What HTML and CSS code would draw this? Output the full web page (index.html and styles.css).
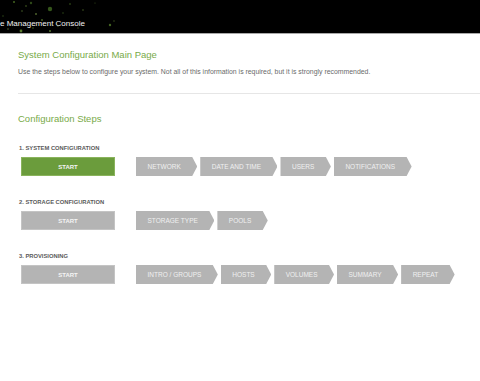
FILE: index.html
```html
<!DOCTYPE html>
<html lang="en">
<head>
    <meta charset="UTF-8">
    <meta name="viewport" content="width=device-width, initial-scale=1.0">
    <title>System Configuration Main Page</title>
    <link rel="stylesheet" href="styles.css">
</head>
<body>
    <div class="header">
        <svg class="sparks" width="140" height="33" viewBox="0 0 140 33">
            <circle cx="14" cy="2" r="1" fill="#5f8f2f" opacity="0.7"/>
            <circle cx="26" cy="6" r="0.8" fill="#7fb040" opacity="0.6"/>
            <circle cx="31" cy="3" r="1.2" fill="#4f7a28" opacity="0.6"/>
            <circle cx="50" cy="9" r="2.2" fill="#4c7a26" opacity="0.7"/>
            <circle cx="36" cy="14" r="0.8" fill="#a6d060" opacity="0.8"/>
            <circle cx="22" cy="11" r="0.7" fill="#8cc050" opacity="0.6"/>
            <circle cx="42" cy="20" r="1" fill="#6a9a38" opacity="0.6"/>
            <circle cx="63" cy="13" r="0.8" fill="#5a8a30" opacity="0.5"/>
            <circle cx="70" cy="4" r="1" fill="#4a7024" opacity="0.5"/>
            <circle cx="83" cy="10" r="0.7" fill="#86b84a" opacity="0.6"/>
            <circle cx="110" cy="25" r="1.2" fill="#5f8f2f" opacity="0.7"/>
            <circle cx="114" cy="21" r="0.7" fill="#7fb040" opacity="0.5"/>
            <circle cx="21" cy="31" r="1.4" fill="#7fb040" opacity="0.7"/>
            <circle cx="8" cy="29" r="0.7" fill="#a6d060" opacity="0.6"/>
            <circle cx="33" cy="28" r="0.8" fill="#6a9a38" opacity="0.6"/>
            <circle cx="50" cy="31" r="1" fill="#8cc050" opacity="0.6"/>
            <circle cx="58" cy="26" r="0.6" fill="#b8e070" opacity="0.8"/>
            <circle cx="78" cy="28" r="0.8" fill="#6a9a38" opacity="0.5"/>
            <circle cx="3" cy="16" r="0.8" fill="#5a8a30" opacity="0.5"/>
            <circle cx="95" cy="3" r="0.6" fill="#6a9a38" opacity="0.5"/>
        </svg>
        <span class="brand">e Management Console</span>
    </div>

    <div class="page">
        <h1 class="title">System Configuration Main Page</h1>
        <p class="intro">Use the steps below to configure your system. Not all of this information is required, but it is strongly recommended.</p>
        <hr class="divider">

        <h2 class="title">Configuration Steps</h2>

        <div class="step-group">
            <div class="step-label">1. SYSTEM CONFIGURATION</div>
            <div class="step-row">
                <button class="start active">START</button>
                <ul class="chevrons">
                    <li>NETWORK</li>
                    <li>DATE AND TIME</li>
                    <li>USERS</li>
                    <li>NOTIFICATIONS</li>
                </ul>
            </div>
        </div>

        <div class="step-group">
            <div class="step-label">2. STORAGE CONFIGURATION</div>
            <div class="step-row">
                <button class="start">START</button>
                <ul class="chevrons">
                    <li>STORAGE TYPE</li>
                    <li>POOLS</li>
                </ul>
            </div>
        </div>

        <div class="step-group">
            <div class="step-label">3. PROVISIONING</div>
            <div class="step-row">
                <button class="start">START</button>
                <ul class="chevrons">
                    <li>INTRO / GROUPS</li>
                    <li>HOSTS</li>
                    <li>VOLUMES</li>
                    <li>SUMMARY</li>
                    <li>REPEAT</li>
                </ul>
            </div>
        </div>
    </div>
</body>
</html>
```

FILE: styles.css
```css
body {
    font-family: "Liberation Sans", Arial, sans-serif;
    margin: 0;
    padding: 0;
    background-color: white;
}
.header {
    position: relative;
    height: 33px;
    background-color: black;
    border-bottom: 1px solid #a8a8a8;
}
.header .sparks {
    position: absolute;
    left: 0;
    top: 0;
}
.header .brand {
    position: relative;
    display: block;
    padding-top: 19px;
    font-size: 8px;
    line-height: 10px;
    color: #f2f2f2;
}
.page {
    padding-left: 18px;
}
.title {
    font-size: 9.5px;
    line-height: 12px;
    font-weight: normal;
    color: #78aa48;
    margin: 0;
}
h1.title {
    margin-top: 15px;
}
.intro {
    font-size: 6.9px;
    line-height: 9px;
    color: #6a6a6a;
    margin: 6px 0 0 0;
}
.divider {
    border: none;
    border-top: 1px solid #e6e6e6;
    margin: 17px 0 0 0;
}
h2.title {
    margin-top: 19px;
}
.step-group {
    margin-top: 19px;
}
.step-group + .step-group {
    margin-top: 22px;
}
.step-label {
    font-size: 5.8px;
    line-height: 8px;
    font-weight: bold;
    color: #5a5a5a;
    padding-left: 1px;
}
.step-row {
    display: flex;
    margin-top: 5px;
    padding-left: 3px;
}
.start {
    width: 94px;
    height: 19px;
    margin-right: 21px;
    padding: 0;
    border: 1px solid #c4c4c4;
    background-color: #b4b4b4;
    color: #f4f4f4;
    font-family: inherit;
    font-size: 6px;
    font-weight: bold;
}
.start.active {
    background-color: #6b9c3c;
    border-color: #8ab35c;
}
.chevrons {
    display: flex;
    gap: 3px;
    list-style: none;
    margin: 0;
    padding: 0;
}
.chevrons li {
    height: 19px;
    line-height: 19px;
    padding: 0 16.5px 0 11.5px;
    background-color: #b4b4b4;
    color: #f0f0f0;
    font-size: 6.5px;
    white-space: nowrap;
    clip-path: polygon(0 0, calc(100% - 5px) 0, 100% 50%, calc(100% - 5px) 100%, 0 100%);
}
```
